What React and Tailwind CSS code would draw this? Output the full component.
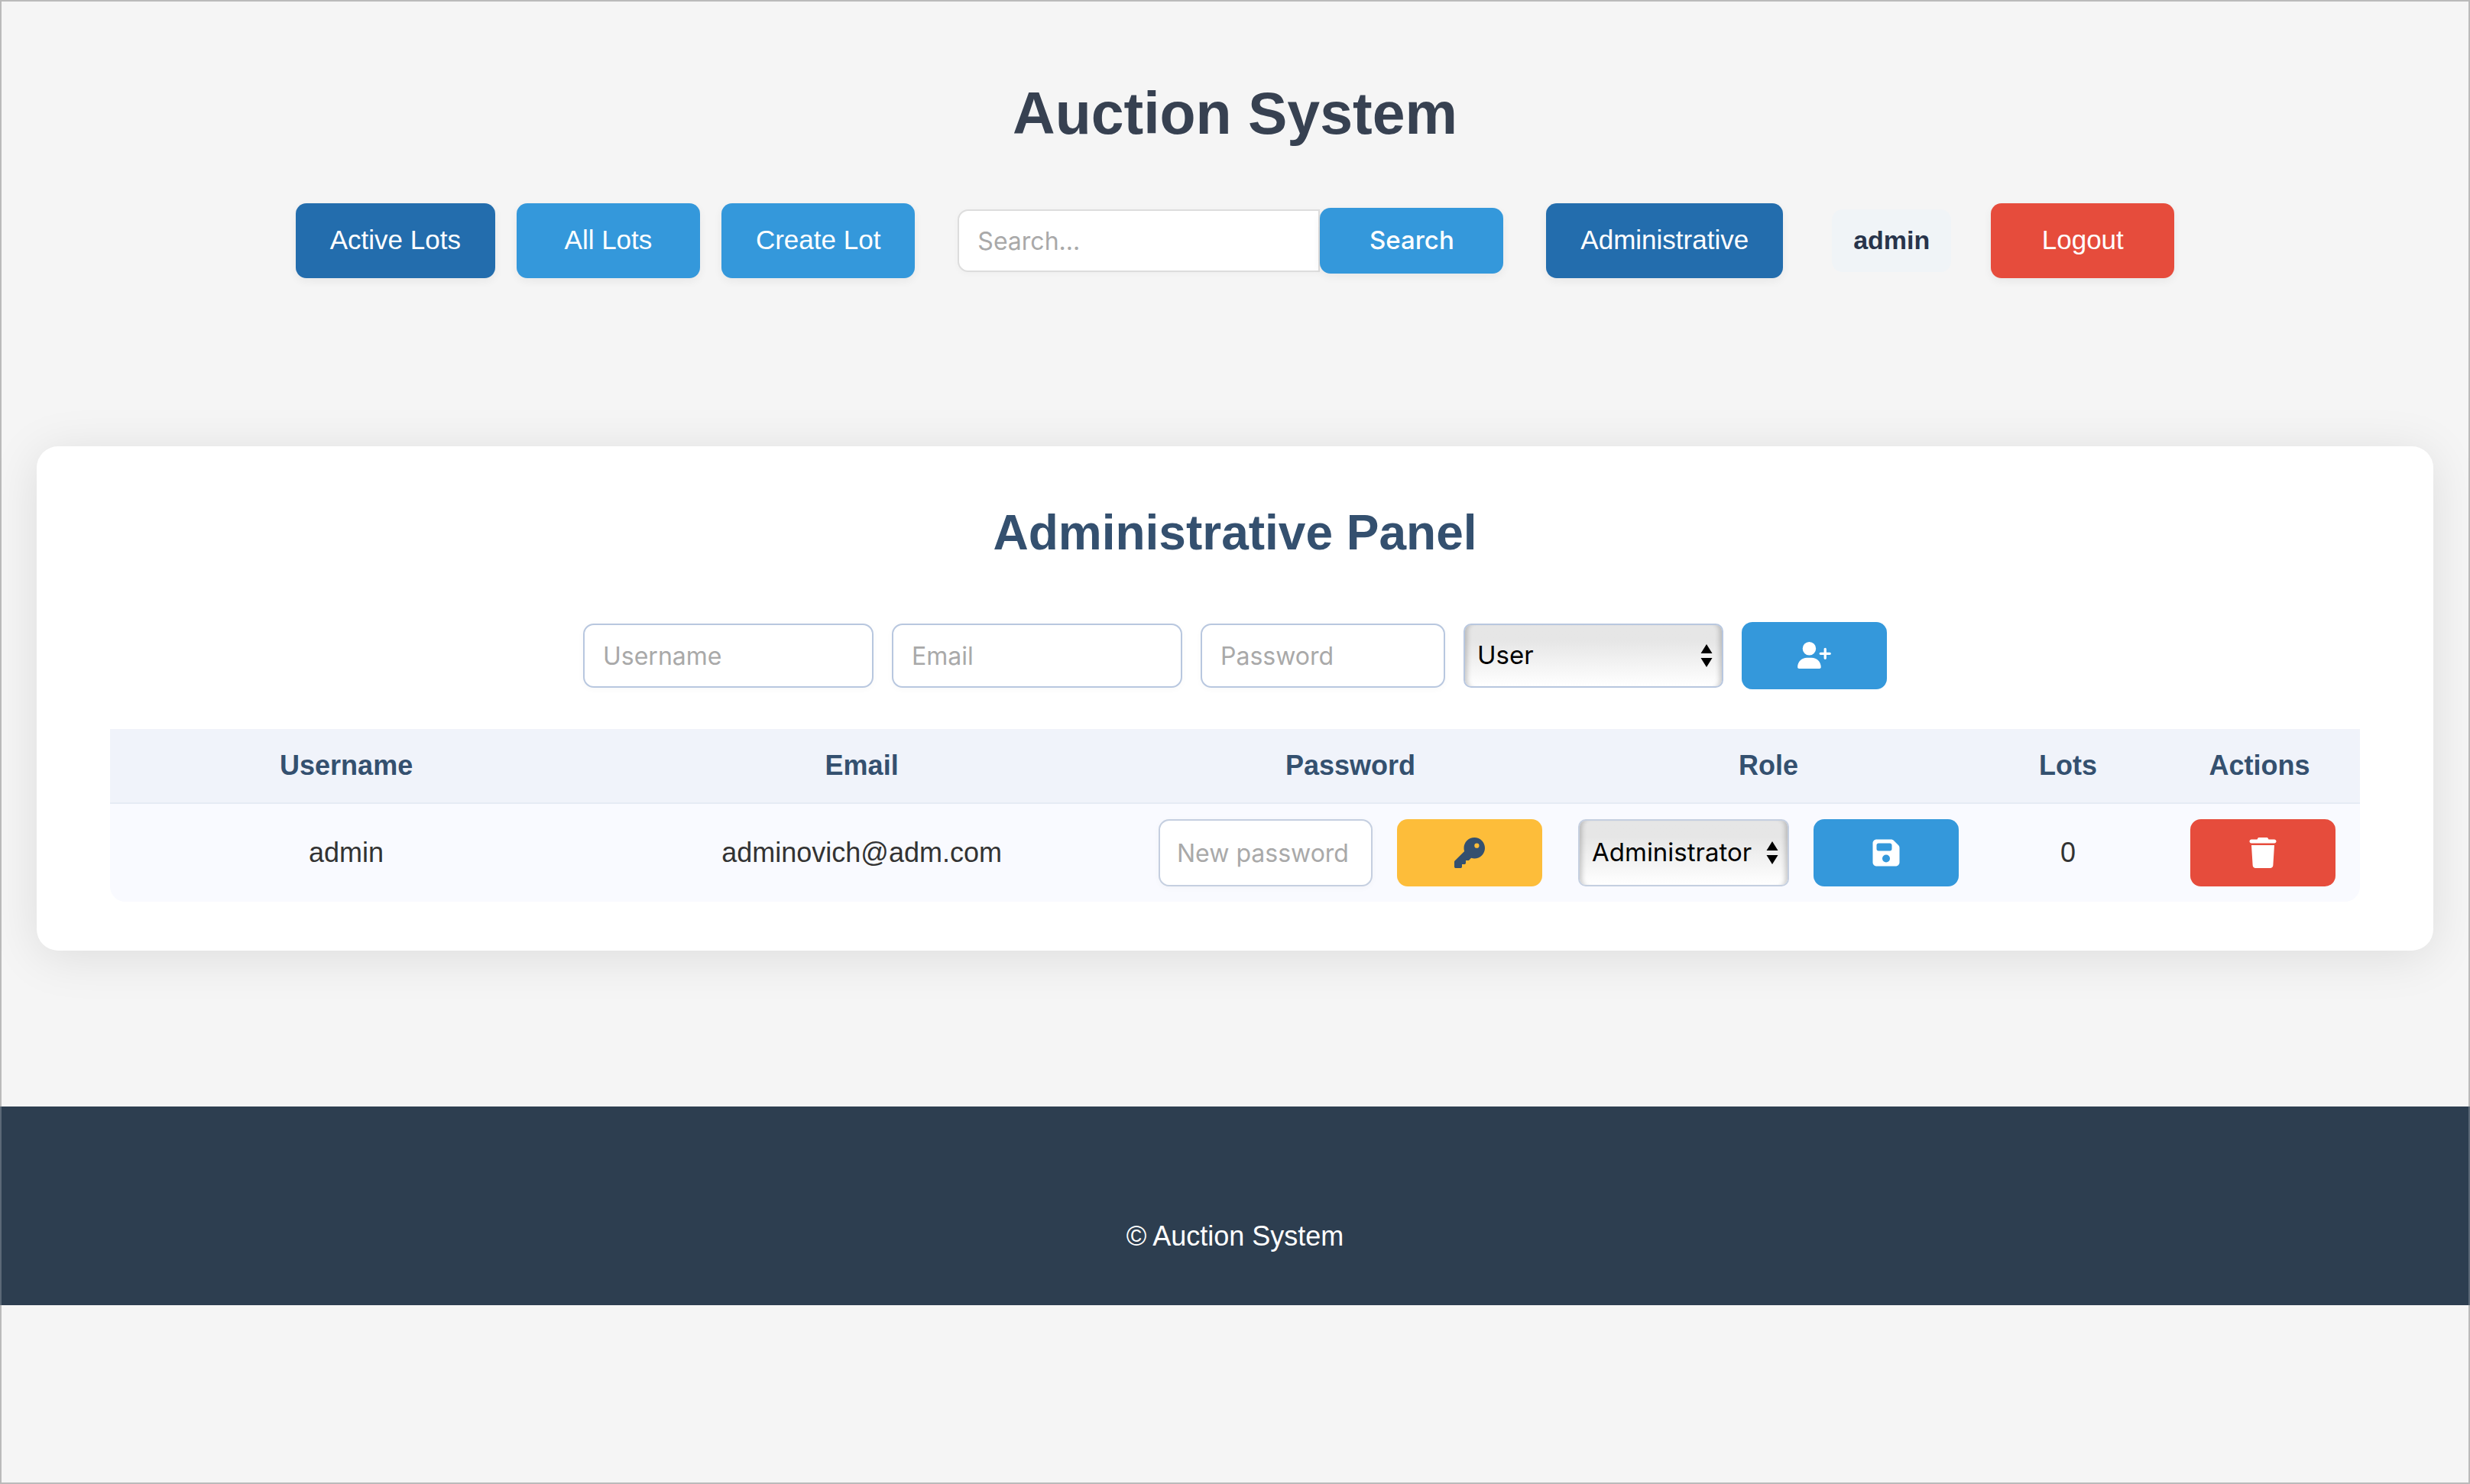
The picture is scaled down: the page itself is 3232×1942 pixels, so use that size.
import { useState } from "react";
import { FaUserPlus, FaKey } from "react-icons/fa6";

const ARIAL = "font-['Liberation_Sans',Arial,sans-serif]";

const navButton =
  "flex h-[98px] min-w-[240px] items-center justify-center rounded-[14px] px-[45px] pb-0.5 text-[35px] text-white shadow-[0_4px_12px_rgba(0,0,0,0.06)]";

const field =
  "rounded-[14px] border-2 bg-white font-['Inter',sans-serif] text-[32px] text-black shadow-[0_2px_8px_rgba(0,0,0,0.03)] outline-none placeholder:text-[#a9a9a9]";

const iconButton =
  "flex h-[88px] w-[190px] shrink-0 items-center justify-center rounded-[14px]";

function Arrows() {
  return (
    <svg
      viewBox="0 0 16 30"
      className="pointer-events-none absolute top-1/2 right-3.5 h-[30px] w-4 -translate-y-1/2"
      aria-hidden="true"
    >
      <path d="M8 0 15.500 12H.5ZM.5 18h15L8 30Z" fill="#000" />
    </svg>
  );
}

function RoleSelect({ label, value, width, height, border }) {
  const [role, setRole] = useState(value);
  return (
    <div className={`relative ${width} ${height}`}>
      <select
        aria-label={label}
        value={role}
        onChange={(e) => setRole(e.target.value)}
        className={`h-full w-full appearance-none rounded-[10px] border-2 ${border} bg-linear-to-b from-[#e6e6e6] from-25% to-white pr-8 pl-4 font-['Inter',sans-serif] text-[33px] text-black shadow-[inset_8px_0_6px_-5px_rgba(0,0,0,0.2),inset_-8px_0_6px_-5px_rgba(0,0,0,0.2)] outline-none`}
      >
        <option>User</option>
        <option>Administrator</option>
      </select>
      <Arrows />
    </div>
  );
}

function SaveIcon() {
  return (
    <svg viewBox="0 0 448 512" className="h-10 w-9" fill="currentColor" aria-hidden="true">
      <path d="M64 32C28.700 32 0 60.700 0 96V416c0 35.300 28.700 64 64 64H384c35.300 0 64-28.700 64-64V173.300c0-17-6.700-33.300-18.700-45.300L352 50.700C340 38.700 323.700 32 306.700 32H64zm0 96c0-17.700 14.300-32 32-32H288c17.700 0 32 14.300 32 32v64c0 17.700-14.300 32-32 32H96c-17.700 0-32-14.300-32-32V128zM224 288a64 64 0 1 1 0 128 64 64 0 1 1 0-128z" />
    </svg>
  );
}

function TrashIcon() {
  return (
    <svg viewBox="0 0 448 512" className="h-10 w-9" fill="currentColor" aria-hidden="true">
      <path d="M135.200 17.700C140.600 6.800 151.700 0 163.800 0H284.200c12.100 0 23.200 6.800 28.600 17.700L320 32h96c17.700 0 32 14.300 32 32s-14.300 32-32 32H32C14.300 96 0 81.700 0 64S14.300 32 32 32h96l7.200-14.300zM32 128H416L394.800 467c-1.600 25.300-22.600 45-47.900 45H101.100c-25.300 0-46.300-19.700-47.900-45L32 128z" />
    </svg>
  );
}

function Header() {
  return (
    <header className="flex flex-col items-center pt-[100px]">
      <h1 className="text-[77px] leading-[92px] font-bold text-[#374151]">Auction System</h1>
      <nav className="mt-[72px] flex items-center">
        <div className="flex gap-7">
          <a href="#active" className={`${navButton} bg-[#236dad]`}>Active Lots</a>
          <a href="#all" className={`${navButton} bg-[#3498db]`}>All Lots</a>
          <a href="#create" className={`${navButton} bg-[#3498db]`}>Create Lot</a>
        </div>
        <form className="mx-14 flex items-center" onSubmit={(e) => e.preventDefault()}>
          <input
            type="text"
            aria-label="Search"
            placeholder="Search..."
            className={`${field} h-[82px] w-[474px] rounded-r-none border-[#dddddd] px-6`}
          />
          <button
            type="submit"
            className="h-[86px] w-60 rounded-[14px] bg-[#3498db] font-['Inter',sans-serif] text-[33px] font-medium text-white shadow-[0_4px_12px_rgba(0,0,0,0.06)]"
          >
            Search
          </button>
        </form>
        <a href="#admin" className={`${navButton} bg-[#236dad]`}>Administrative</a>
        <span className="mr-[52px] ml-16 flex h-[82px] items-center rounded-[14px] bg-[#f0f4f7] px-7 pb-0.5 text-[34px] font-bold text-[#28344b]">
          admin
        </span>
        <a href="#logout" className={`${navButton} bg-[#e64c3c]`}>Logout</a>
      </nav>
    </header>
  );
}

function CreateUserForm() {
  return (
    <form className="mt-20 flex items-center justify-center gap-6" onSubmit={(e) => e.preventDefault()}>
      <input type="text" aria-label="Username" placeholder="Username" className={`${field} h-[84px] w-[380px] border-[#b8c7df] px-6`} />
      <input type="email" aria-label="Email" placeholder="Email" className={`${field} h-[84px] w-[380px] border-[#b8c7df] px-6`} />
      <input type="password" aria-label="Password" placeholder="Password" className={`${field} h-[84px] w-[320px] border-[#b8c7df] px-6`} />
      <RoleSelect label="Role" value="User" width="w-[340px]" height="h-[84px]" border="border-[#b8c7df]" />
      <button type="submit" aria-label="Add user" className={`${iconButton} bg-[#3498db] pb-0.5 text-white`}>
        <FaUserPlus className="h-[35px] w-11" />
      </button>
    </form>
  );
}

function UsersTable() {
  return (
    <table className="mt-[52px] w-full table-fixed border-separate border-spacing-0 overflow-hidden rounded-b-[20px] bg-[#f9faff] text-center text-[36px] text-[#333333]">
      <colgroup>
        <col className="w-[21%]" />
        <col />
        <col className="w-[548px]" />
        <col className="w-[546px]" />
        <col className="w-[238px]" />
        <col className="w-[263px]" />
      </colgroup>
      <thead>
        <tr className="h-[98px] bg-[#f0f3fa] text-[#34506f]">
          {["Username", "Email", "Password", "Role", "Lots", "Actions"].map((name) => (
            <th key={name} scope="col" className="border-b-2 border-[#e6ebf4] font-bold">
              {name}
            </th>
          ))}
        </tr>
      </thead>
      <tbody>
        <tr className="h-32">
          <td>admin</td>
          <td>adminovich@adm.com</td>
          <td>
            <form className="flex items-center justify-center gap-8" onSubmit={(e) => e.preventDefault()}>
              <input
                type="password"
                aria-label="New password"
                placeholder="New password"
                className={`${field} h-[88px] w-[280px] border-[#c5cfe0] px-[22px]`}
              />
              <button type="submit" aria-label="Change password" className={`${iconButton} bg-[#fdbd3a] text-[#34506f]`}>
                <FaKey className="h-10 w-10" />
              </button>
            </form>
          </td>
          <td>
            <form className="flex items-center justify-center gap-8" onSubmit={(e) => e.preventDefault()}>
              <RoleSelect label="Role of admin" value="Administrator" width="w-[276px]" height="h-[88px]" border="border-[#c5cfe0]" />
              <button type="submit" aria-label="Save role" className={`${iconButton} bg-[#3498db] text-white`}>
                <SaveIcon />
              </button>
            </form>
          </td>
          <td>0</td>
          <td className="pr-8">
            <button type="button" aria-label="Delete user" className={`${iconButton} ml-auto bg-[#e64c3c] text-white`}>
              <TrashIcon />
            </button>
          </td>
        </tr>
      </tbody>
    </table>
  );
}

export default function App() {
  return (
    <div className={`min-h-screen border-2 border-[#bababa] bg-[#f5f5f5] ${ARIAL}`}>
      <Header />
      <main className="mx-[46px] mt-[220px] rounded-[28px] bg-white px-24 pt-[76px] pb-16 shadow-[0_8px_64px_rgba(0,0,0,0.1)]">
        <h2 className="text-center text-[64px] leading-[74px] font-bold text-[#34506f]">Administrative Panel</h2>
        <CreateUserForm />
        <UsersTable />
      </main>
      <footer className="-mx-0.5 mt-[204px] border-x-2 border-[#5b6977] bg-[#2d3e50] pt-[148px] pb-[68px] text-center text-[36px] leading-[44px] text-white">
        © Auction System
      </footer>
    </div>
  );
}
